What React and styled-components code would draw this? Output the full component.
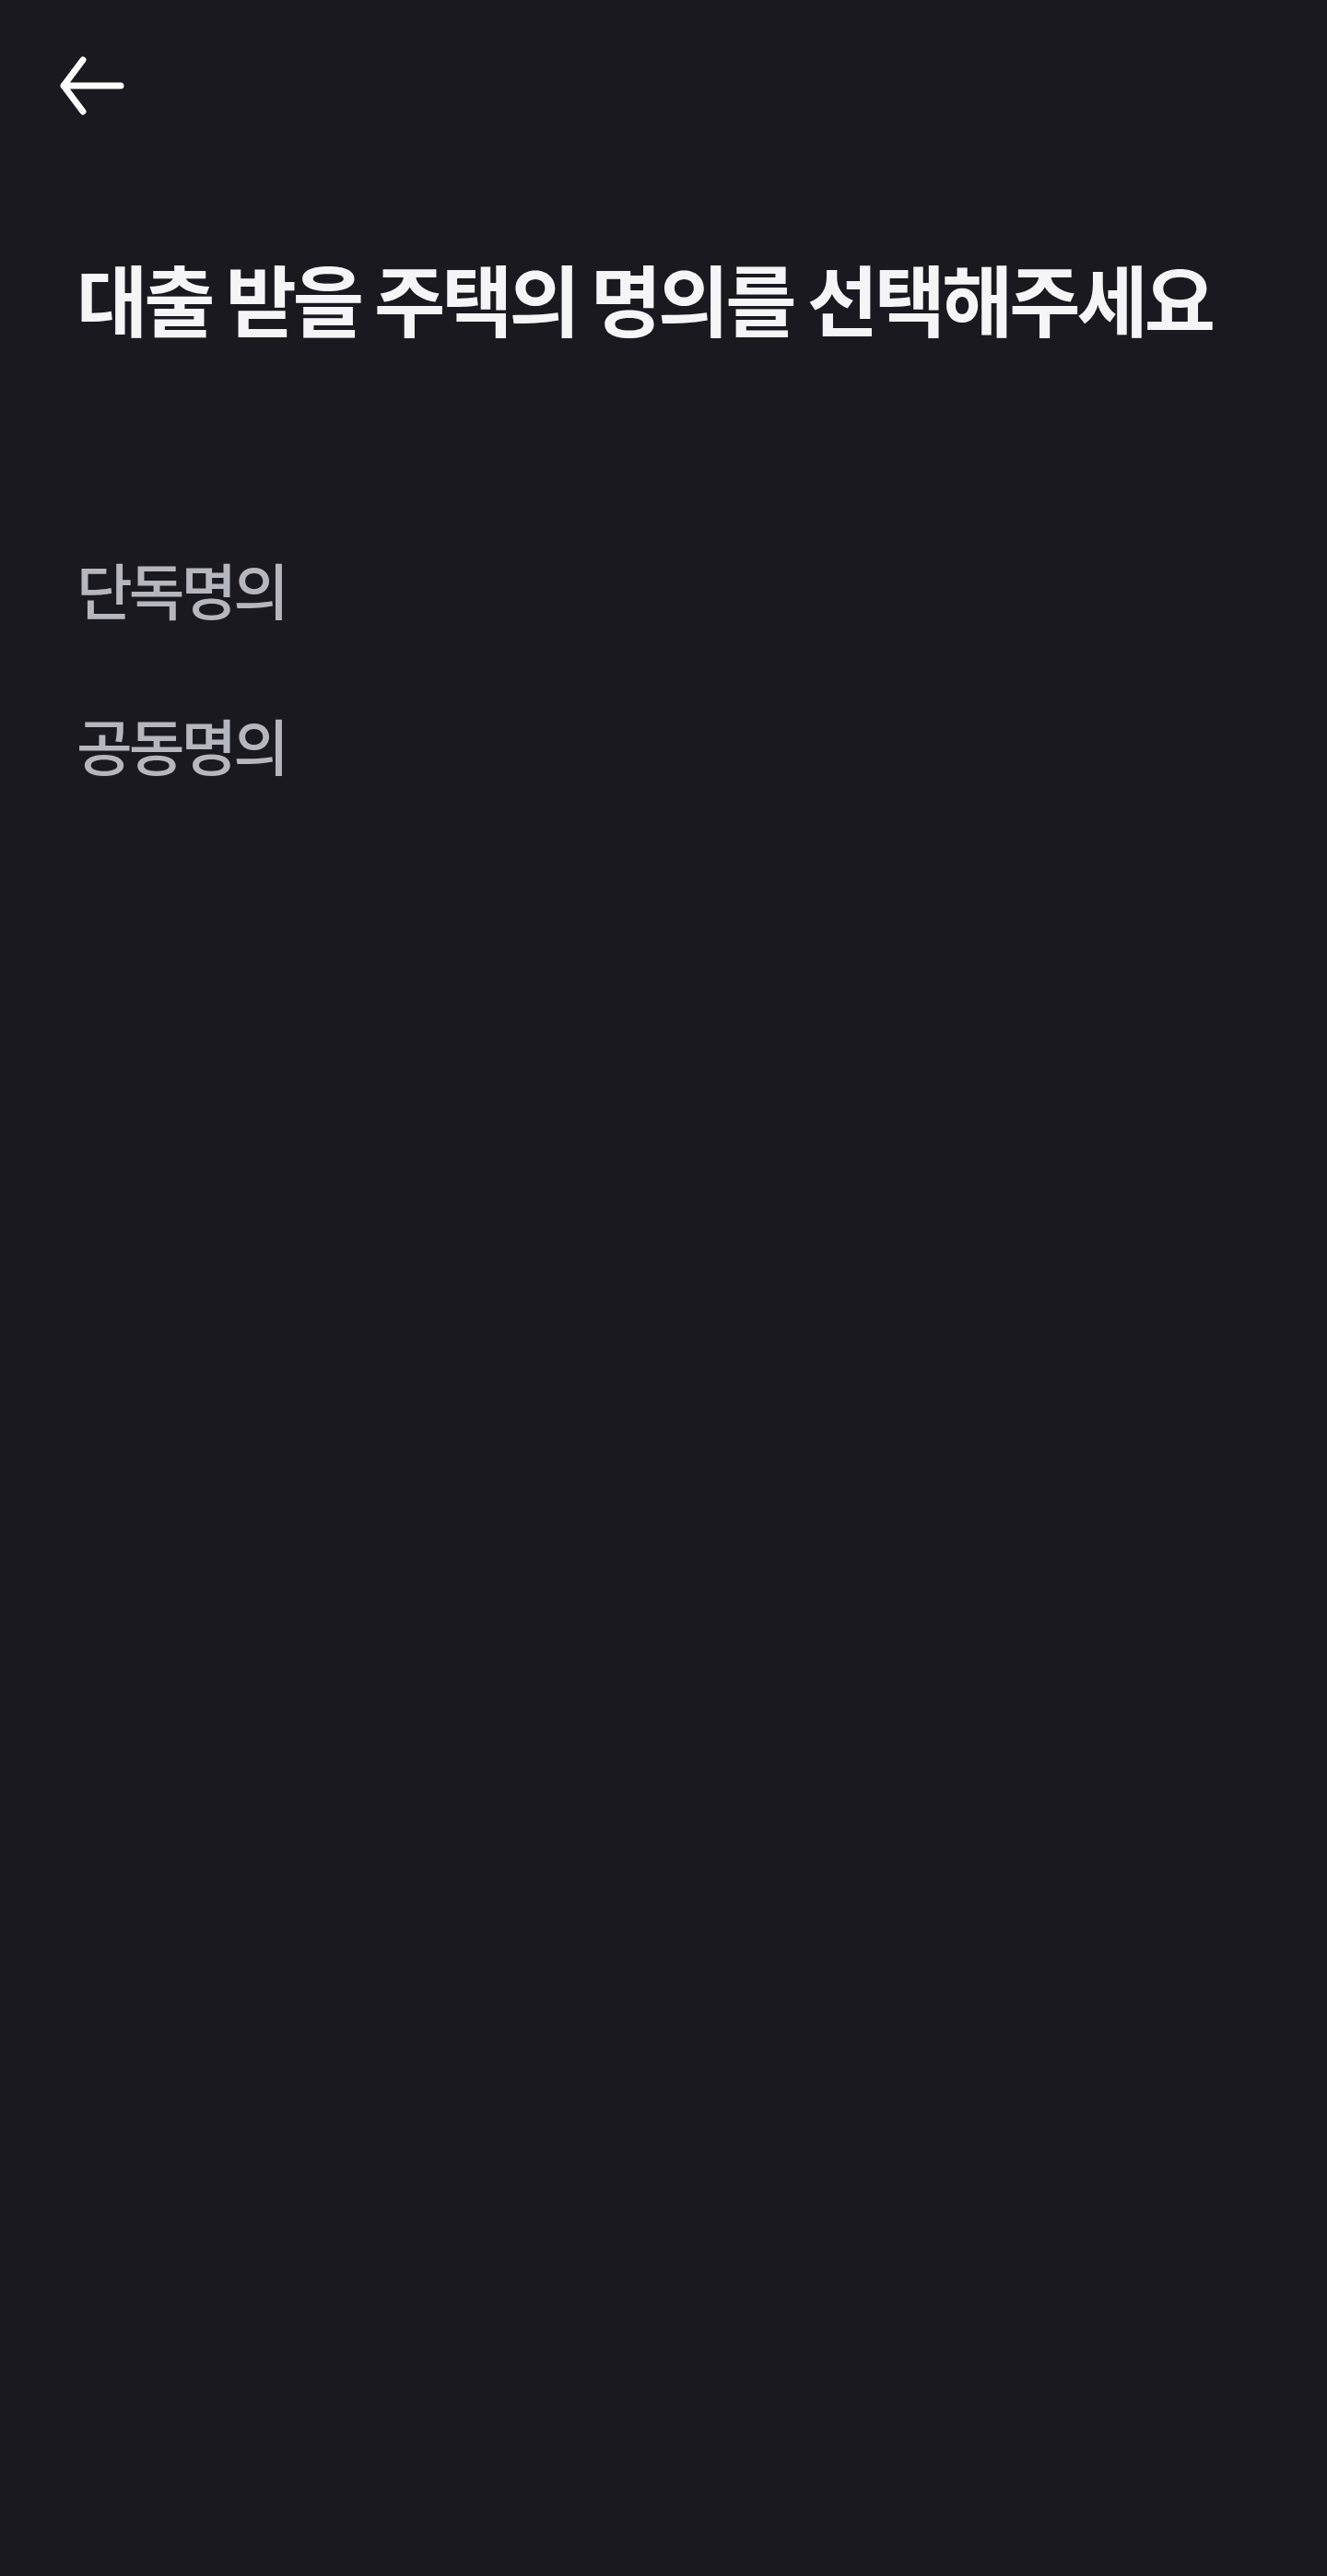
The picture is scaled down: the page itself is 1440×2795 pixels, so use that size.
import styled, { createGlobalStyle } from "styled-components"

const GlobalStyle = createGlobalStyle`
    html, body {
        margin: 0;
        padding: 0;
        background: #1a191f;
    }
    body {
        font-family: "Noto Sans CJK KR", "Noto Sans", sans-serif;
    }
`

const Page = styled.div`
    min-height: 2795px;
    background: #1a191f;
    display: flex;
    flex-direction: column;
`

const Header = styled.header`
    height: 188px;
    display: flex;
    align-items: center;
    padding: 0 0 0 62px;
    box-sizing: border-box;
`

const BackButton = styled.button`
    background: none;
    border: none;
    padding: 0;
    width: 76px;
    height: 76px;
    display: flex;
    align-items: center;
    justify-content: center;
    cursor: pointer;
    margin-top: -2px;
`

const Title = styled.h1`
    margin: 80px 0 0;
    padding: 0 83px;
    color: #f5f5f7;
    font-size: 84px;
    font-weight: 700;
    letter-spacing: -0.048em;
    line-height: 1.3;
`

const OptionList = styled.ul`
    list-style: none;
    margin: 222px 0 0;
    padding: 0 83px;
    display: flex;
    flex-direction: column;
    gap: 90px;
`

const Option = styled.li`
    color: #b6b6be;
    font-size: 66px;
    font-weight: 500;
    letter-spacing: -0.06em;
    line-height: 1.2;
    cursor: pointer;
`

const BackArrow = () => (
    <svg width="70" height="64" viewBox="0 0 70 64" fill="none">
        <path
            d="M25 4L4 32L25 60M4 32H66"
            stroke="#ffffff"
            strokeWidth="7"
            strokeLinecap="round"
            strokeLinejoin="round"
        />
    </svg>
)

const options = ["단독명의", "공동명의"]

export default function App() {
    return (
        <Page>
            <GlobalStyle />
            <Header>
                <BackButton aria-label="뒤로가기">
                    <BackArrow />
                </BackButton>
            </Header>
            <Title>대출 받을 주택의 명의를 선택해주세요</Title>
            <OptionList>
                {options.map((label) => (
                    <Option key={label}>{label}</Option>
                ))}
            </OptionList>
        </Page>
    )
}
